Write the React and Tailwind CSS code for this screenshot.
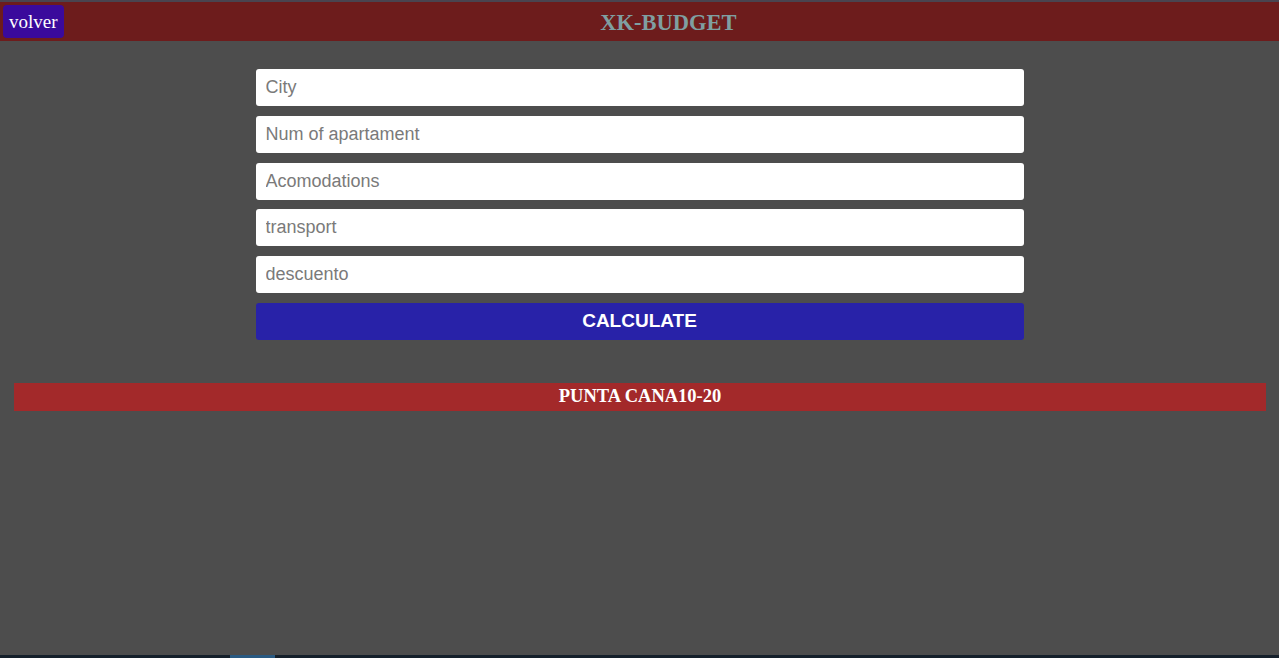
export default function App() {
  const fields = ['City', 'Num of apartament', 'Acomodations', 'transport', 'descuento'];

  return (
    <div className="min-h-[658px] flex flex-col bg-[#4d4d4d]">
      {/* Header */}
      <header className="h-[41px] border-t-2 border-[#4a4450] bg-[#6d1c1c] flex items-center relative">
        <button className="absolute left-[3px] top-[3px] h-[33px] px-[6px] rounded-[4px] bg-[#3a0a9c] text-white text-[19px] leading-none font-['Liberation_Serif',serif]">
          volver
        </button>
        <h1 className="w-full text-center pl-[58px] pt-[3px] text-[22.5px] font-bold text-[#7f9fa1] font-['Liberation_Serif',serif]">
          XK-BUDGET
        </h1>
      </header>

      {/* Form */}
      <div className="mt-[28px] w-[768px] mx-auto flex flex-col gap-[9.8px] font-['Liberation_Sans',sans-serif]">
        {fields.map((f) => (
          <input
            key={f}
            type="text"
            placeholder={f}
            className="h-[37px] rounded-[3px] bg-white px-[10px] text-[18px] text-[#333] placeholder:text-[#7a7a7a] outline-none"
          />
        ))}
        <button className="h-[37px] rounded-[3px] bg-[#2822a8] text-white text-[19px] font-bold">
          CALCULATE
        </button>
      </div>

      {/* Result */}
      <div className="mt-[43px] ml-[14px] mr-[13px] h-[28px] bg-[#a3292a] flex items-center justify-center text-white font-bold text-[18.5px] font-['Liberation_Serif',serif]">
        PUNTA CANA10-20
      </div>

      <div className="flex-1" />
      <div className="h-[3px] bg-[#15202b] flex">
        <div className="ml-[230px] w-[45px] bg-[#2a5a82]" />
      </div>
    </div>
  );
}
